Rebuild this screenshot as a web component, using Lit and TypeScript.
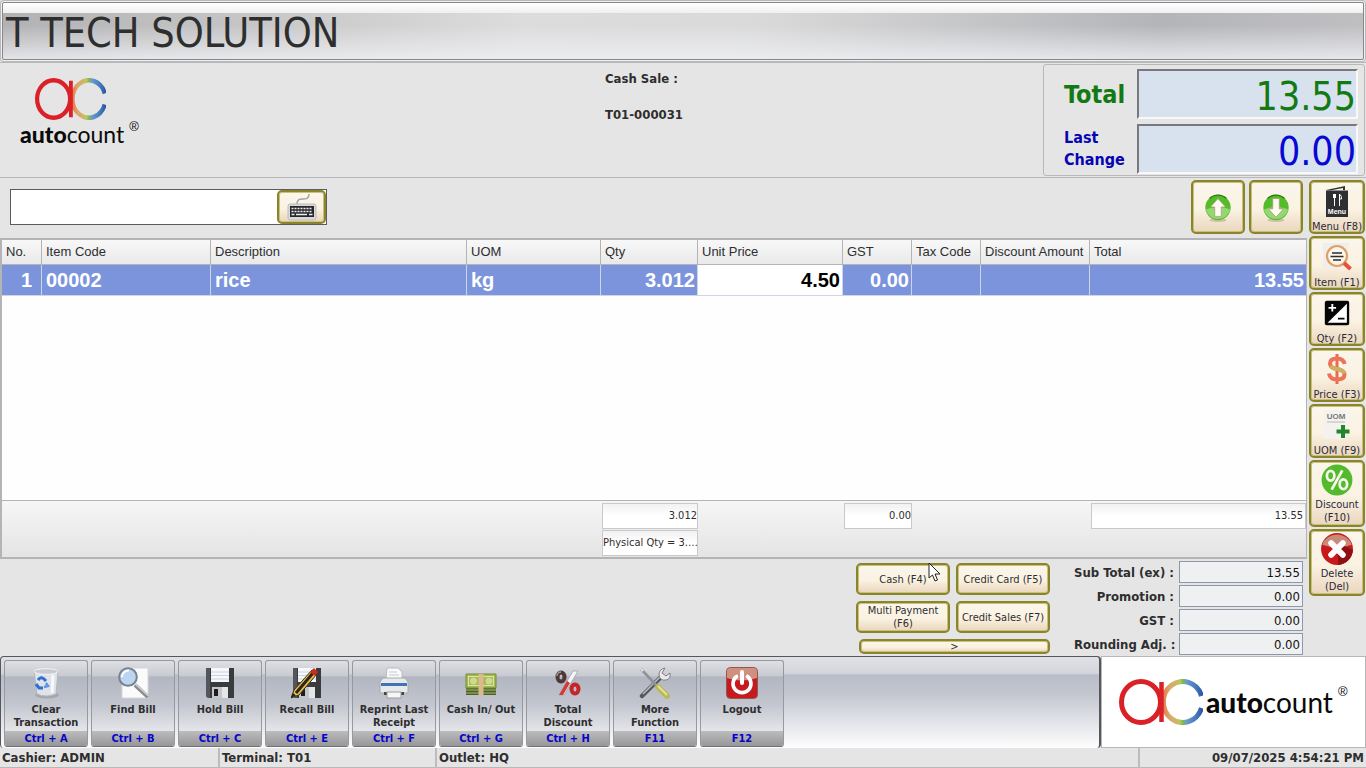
import { LitElement, html, svg, css } from "lit";
import type { TemplateResult } from "lit";
import { customElement, property, state } from "lit/decorators.js";
import { classMap } from "lit/directives/class-map.js";

const pic = (size: number, body: unknown, w = size) =>
  html`<svg width=${w} height=${size} viewBox="0 0 32 32" aria-hidden="true">${body}</svg>`;

const floppy = svg`
  <path d="M2 1h28v30H4l-2-2z" fill="#3a3b3f"/>
  <path d="M2 1h4v30H4l-2-2z" fill="#55565b"/>
  <rect x="7" y="1" width="18" height="14" fill="#f7f8fa"/>
  <path d="M7 5h18M7 8.500h18M7 12h18" stroke="#c9d2e2"/>
  <rect x="8" y="20" width="16" height="11" fill="#c4c6ca"/>
  <rect x="10" y="22" width="4" height="7" fill="#1d1d20"/>
  <rect x="18" y="20" width="6" height="11" fill="#e5e6e8"/>`;

const ICONS: Record<string, TemplateResult> = {
  keyboard: html`<svg width="30" height="28" viewBox="0 0 30 28" aria-hidden="true">
    <path d="M10 11c0-5 3-5 6-5s6 0 6-5" fill="none" stroke="#a4a4a6" stroke-width="1.600"/>
    <rect x="1" y="11" width="28" height="16" rx="2" fill="#d9d9db" stroke="#bcbcbe"/>
    <rect x="3" y="13" width="24" height="11" fill="#27282c"/>
    <path d="M4.500 15.500h21M4.500 18.500h21" stroke="#eeeeef" stroke-width="1.600" stroke-dasharray="2 1"/>
    <path d="M4.500 21.500h3M9 21.500h11M22 21.500h3.500" stroke="#eeeeef" stroke-width="1.600"/>
  </svg>`,
  up: pic(30, svg`
    <ellipse cx="16" cy="30" rx="9" ry="2" fill="#b9ab90" opacity=".6"/>
    <circle cx="16" cy="16.500" r="13.500" fill="#55bb2a"/>
    <path d="M3 19a13.500 13.500 0 0 0 26 0c-7-4-18-4-26 0z" fill="#93d873"/>
    <path d="M7 7a13 13 0 0 1 18 0" fill="none" stroke="#2a7c16" stroke-width="1.500"/>
    <path d="M16 7l8 9h-4.500v10h-7V16H8z" fill="#fdfaf4" stroke="#a79d63" stroke-width=".8"/>`),
  down: pic(30, svg`
    <ellipse cx="16" cy="30" rx="9" ry="2" fill="#b9ab90" opacity=".6"/>
    <circle cx="16" cy="16.500" r="13.500" fill="#55bb2a"/>
    <path d="M3 19a13.500 13.500 0 0 0 26 0c-7-4-18-4-26 0z" fill="#93d873"/>
    <path d="M7 7a13 13 0 0 1 18 0" fill="none" stroke="#2a7c16" stroke-width="1.500"/>
    <path d="M16 27l8-9h-4.500V7h-7v11H8z" fill="#fdfaf4" stroke="#a79d63" stroke-width=".8"/>`),
  menu: pic(32, svg`
    <path d="M5 5l19-4v4h-2V3L9 5.500z" fill="#333436"/>
    <path d="M5 5.500h22V32H5z" fill="#2e2f31"/>
    <path d="M12.500 9v4M14.500 9v4M13.500 9v12M18.500 21V9q2.500 2 2 5h-2" stroke="#fff" fill="none"/>
    <text x="16" y="28.500" font-family="Liberation Sans" font-weight="700" font-size="7" fill="#fff" text-anchor="middle">Menu</text>`),
  item: pic(32, svg`
    <path d="M2 2h26l-4 25H2z" fill="#efeeec"/>
    <circle cx="16" cy="15" r="10" fill="#faf6ee" stroke="#dfa066" stroke-width="2.200"/>
    <path d="M11 12h10M9.500 15.500h13M12 19h8" stroke="#2d2d2d" stroke-width="1.600"/>
    <path d="M23 22l6.500 6" stroke="#ea4f3c" stroke-width="4"/>`),
  qty: pic(30, svg`
    <rect x="3" y="3" width="26" height="26" rx="2" fill="#050505"/>
    <path d="M26.500 6v20.500H6z" fill="#fff"/>
    <path d="M7 10.500h8M11 6.500v8" stroke="#fff" stroke-width="2"/>
    <path d="M17 22h7" stroke="#050505" stroke-width="2"/>`),
  price: pic(32, svg`
    <path d="M16 1v30" stroke="#ea6a52" stroke-width="3"/>
    <path d="M23.500 11q-1-5.500-7.500-5.500-7 0-7 5 0 4.500 7 5.500t7.500 5.500q0 5-7.500 5-7 0-8-6" fill="none" stroke="#ec7358" stroke-width="4"/>
    <path d="M9.500 13q1.500 2.200 6.500 3 6.500 1 7.300 4.500" fill="none" stroke="#cdb065" stroke-width="4"/>`),
  uom: pic(32, svg`
    <path d="M3 1h22v29H3z" fill="#f4f2ef"/>
    <text x="15" y="10" font-family="Liberation Sans" font-weight="700" font-size="8" fill="#77787a" text-anchor="middle">UOM</text>
    <path d="M6 13h18" stroke="#b8b8b8"/>
    <path d="M22 16v13M15.500 22.500h13" stroke="#23862b" stroke-width="4"/>`),
  discount: pic(34, svg`
    <circle cx="16" cy="16" r="14.500" fill="#52ba2b"/>
    <g fill="none" stroke="#f7f6ea" stroke-width="2.600">
      <ellipse cx="10" cy="12" rx="3.500" ry="4.500"/><ellipse cx="22" cy="20" rx="3.500" ry="4.500"/>
      <path d="M21 7l-10 18"/></g>`),
  remove: pic(34, svg`
    <circle cx="16" cy="16" r="15" fill="#c8191d"/>
    <path d="M2 12a15 15 0 0 1 28 0q-14 5-28 0z" fill="#c98a78"/>
    <path d="M17 31a15 15 0 0 0 14-14L22 13l-5 5z" fill="#8e1013"/>
    <path d="M10.500 10.500l11 11M21.500 10.500l-11 11" stroke="#fff" stroke-width="5.500" stroke-linecap="round"/>`),
  clear: pic(32, svg`
    <ellipse cx="17" cy="28" rx="12" ry="3.500" fill="#a5a7aa"/>
    <path d="M4 4l3 23q9 4 19 0l2-23z" fill="#dfe3e9" stroke="#b4b8be"/>
    <ellipse cx="16" cy="4.500" rx="12" ry="2.800" fill="#c5cad3" stroke="#f3f4f6"/>
    <path d="M23 8l-1 18" stroke="#f6f8fa" stroke-width="3"/>
    <path d="M8 13q3-4 6-1l2 2" fill="none" stroke="#2f6fd0" stroke-width="3"/>
    <path d="M6 17l3 4h4" fill="none" stroke="#2f6fd0" stroke-width="3"/>
    <path d="M14 20l4-1-2-3" fill="none" stroke="#5d94e4" stroke-width="2.400"/>`),
  find: pic(32, svg`
    <path d="M5 1h26v30H5z" fill="#fbfbfc" stroke="#d5d6d8"/>
    <path d="M18 18l13 12" stroke="#8b8c90" stroke-width="4"/>
    <path d="M18.500 17l13 12" stroke="#d5d6d9" stroke-width="1.400"/>
    <circle cx="11" cy="10" r="8.800" fill="#bcd6f2" stroke="#77818f" stroke-width="2"/>
    <path d="M5 10a6.500 6.500 0 0 1 7-6.500" fill="none" stroke="#fff" stroke-width="2"/>`),
  hold: pic(32, floppy),
  recall: pic(32, svg`${floppy}
    <path d="M0 31l3-8L21 3l5 4L8 28z" fill="#e6bd4a" stroke="#3b3022"/>
    <path d="M5 26L22 6" stroke="#2c261e" stroke-width="3"/>
    <path d="M19 5l4-4 4 4-3 4z" fill="#cf2a1e"/>
    <path d="M0 31l2-5 3 2.500z" fill="#222"/>`),
  print: pic(32, svg`
    <path d="M8 12l1-11h11l4 4v7z" fill="#fafafa" stroke="#b9bbbe"/>
    <path d="M11 5h8M11 8h10" stroke="#c9cbce"/>
    <path d="M5 11h22l3 4v11H2V15z" fill="#e8e9eb" stroke="#a9abae"/>
    <path d="M3 16h26v3H3z" fill="#3f74b5"/>
    <path d="M6 25h20v3H6z" fill="#444649"/>
    <path d="M9 25h14v6H9z" fill="#f7f7f8" stroke="#9b9da0"/>`),
  cash: pic(32, svg`
    <path d="M1 21h30v7H1z" fill="#4c6127"/>
    <path d="M1 23h30M1 26h30" stroke="#a9b974"/>
    <path d="M1 7h30v14H1z" fill="#a3ba55" stroke="#74893a"/>
    <rect x="3.500" y="9.500" width="25" height="9" fill="none" stroke="#dde5a6"/>
    <circle cx="8.500" cy="14" r="3.500" fill="#cdda8a"/><circle cx="24" cy="14" r="3.500" fill="#cdda8a"/>
    <path d="M13.500 7h5v21h-5z" fill="#dcb98a"/>`),
  percent: pic(32, svg`
    <ellipse cx="9" cy="10" rx="3.500" ry="4.500" fill="none" stroke="#4d3a38" stroke-width="4"/>
    <ellipse cx="23" cy="22" rx="3.500" ry="4.500" fill="none" stroke="#c4262a" stroke-width="4"/>
    <path d="M5 9a4 4 0 0 1 4-4" fill="none" stroke="#a89a98" stroke-width="1.500"/>
    <path d="M21 4h5L12 28H7z" fill="#f5f5f5" stroke="#a3a3a6" stroke-width=".8"/>
    <path d="M15 14l3 2-7 12H7z" fill="#cf3a3a"/>`),
  tools: pic(32, svg`
    <path d="M3 29L23 9" stroke="#55575c" stroke-width="4.500" stroke-linecap="round"/>
    <path d="M4 27L23 8" stroke="#b9bcc1" stroke-width="1.600"/>
    <path d="M26 1l-3 5 4 3 4-3q1 6-4 7-6 1-7-5 0-6 6-7z" fill="#e8e9eb" stroke="#7e8085"/>
    <path d="M2 2l15 16" stroke="#8f9297" stroke-width="2.600"/>
    <path d="M1 1l4 2-2 2z" fill="#e9e9ea"/>
    <path d="M19 20l9 9" stroke="#b9b95a" stroke-width="6" stroke-linecap="round"/>
    <path d="M19 19l9 9" stroke="#e3e39a" stroke-width="1.800"/>`),
  power: pic(32, svg`
    <rect x=".5" y=".5" width="31" height="31" rx="4" fill="#c61a1e" stroke="#8e5a50"/>
    <path d="M1 4q0-3 3-3h24q3 0 3 3v7Q16 16 1 11z" fill="#d08f80"/>
    <path d="M10.500 9.500a9 9 0 1 0 11 0" fill="none" stroke="#fff" stroke-width="3.600" stroke-linecap="round"/>
    <path d="M16 5v11" stroke="#fff" stroke-width="4" stroke-linecap="round"/>`),
};

@customElement("brand-logo")
export class BrandLogo extends LitElement {
  @property({ type: Boolean, reflect: true }) wide = false;

  static styles = css`
    :host {
      display: inline-flex;
      flex-direction: column;
      color: #0a0a0a;
      font-family: Lato, "Liberation Sans", sans-serif;
      --word: 23px;
    }
    :host([wide]) {
      flex-direction: row;
      align-items: center;
      --word: 28px;
    }
    .mark {
      width: 71px;
      height: 42px;
      margin-left: 15px;
    }
    :host([wide]) .mark {
      width: 84px;
      height: 46px;
      margin-left: 0;
    }
    .word {
      display: flex;
      font-size: var(--word);
      line-height: 28px;
      white-space: nowrap;
    }
    :host([wide]) .word {
      padding-left: 3px;
    }
    .bold {
      font-weight: 900;
    }
    .thin {
      font-weight: 400;
    }
    .reg {
      font: 13px/13px "Liberation Sans", sans-serif;
      padding-left: 5px;
    }
    :host([wide]) .reg {
      margin-top: -3px;
    }
  `;

  render() {
    return html`
      <svg class="mark" viewBox="0 0 84 46" preserveAspectRatio="none" aria-hidden="true">
        <defs>
          <linearGradient id="arc" x1="42" x2="84" gradientUnits="userSpaceOnUse">
            <stop offset="0" stop-color="#f0683f" />
            <stop offset=".2" stop-color="#d9a868" />
            <stop offset=".45" stop-color="#c6bf68" />
            <stop offset=".52" stop-color="#72c43c" />
            <stop offset=".6" stop-color="#6d9bd0" />
            <stop offset=".85" stop-color="#4377b8" />
            <stop offset="1" stop-color="#2c50a6" />
          </linearGradient>
        </defs>
        <path d="M82.500 17a19.500 20.500 0 1 0 0 12" fill="none" stroke="url(#arc)" stroke-width="5" />
        <ellipse cx="22" cy="23" rx="19.500" ry="20.500" fill="none" stroke="#da2127" stroke-width="5" />
        <path d="M42.500 3v40" stroke="#da2127" stroke-width="4.500" />
      </svg>
      <span class="word"><span class="bold">auto</span><span class="thin">count</span><span class="reg">®</span></span>
    `;
  }
}

interface Column { head: string; value: string; right?: boolean; edit?: boolean }

@customElement("app-root")
export class AppRoot extends LitElement {
  @state() private columns: Column[] = [
    { head: "No.", value: "1", right: true },
    { head: "Item Code", value: "00002" },
    { head: "Description", value: "rice" },
    { head: "UOM", value: "kg" },
    { head: "Qty", value: "3.012", right: true },
    { head: "Unit Price", value: "4.50", right: true, edit: true },
    { head: "GST", value: "0.00", right: true },
    { head: "Tax Code", value: "" },
    { head: "Discount Amount", value: "" },
    { head: "Total", value: "13.55", right: true },
  ];

  private rail = [
    ["menu", "Menu (F8)"],
    ["item", "Item (F1)"],
    ["qty", "Qty (F2)"],
    ["price", "Price (F3)"],
    ["uom", "UOM (F9)"],
    ["discount", "Discount (F10)"],
    ["remove", "Delete (Del)"],
  ];

  private tools = [
    ["clear", "Clear Transaction", "Ctrl + A"],
    ["find", "Find Bill", "Ctrl + B"],
    ["hold", "Hold Bill", "Ctrl + C"],
    ["recall", "Recall Bill", "Ctrl + E"],
    ["print", "Reprint Last Receipt", "Ctrl + F"],
    ["cash", "Cash In/ Out", "Ctrl + G"],
    ["percent", "Total Discount", "Ctrl + H"],
    ["tools", "More Function", "F11"],
    ["power", "Logout", "F12"],
  ];

  private sums = [
    ["sub", "Sub Total (ex) :", "13.55"],
    ["promo", "Promotion :", "0.00"],
    ["gst", "GST :", "0.00"],
    ["round", "Rounding Adj. :", "0.00"],
  ];

  static styles = css`
    :host {
      display: flex;
      flex-direction: column;
      min-height: 100vh;
      background: #e5e5e5;
      color: #2e2e2e;
      font-family: Tahoma, "DejaVu Sans Condensed", "DejaVu Sans", sans-serif;
      font-size: 11px;
      overflow: hidden;
    }
    * {
      box-sizing: border-box;
    }
    button,
    input {
      font: inherit;
      color: inherit;
      margin: 0;
    }
    svg {
      display: block;
      flex: none;
    }

    .title {
      margin: 2px;
      border: 1px solid #86878a;
      border-radius: 2px;
      box-shadow: 0 0 0 1px #f0f0f0, 0 0 0 2px #b9b9b9;
      height: 58px;
      background:
        linear-gradient(#fff, #f0f0f0 17%, transparent 18%),
        linear-gradient(transparent 40%, rgba(240, 241, 245, 0.8)),
        linear-gradient(90deg, #b2b2b4, #dcdcdc 38%, #dadada 55%, #b4b5b9 85%, #bfbfc2);
    }
    .title h1 {
      margin: 0;
      padding: 3px 0 0 3px;
      font-weight: 400;
      font-size: 41px;
      line-height: 55px;
      white-space: nowrap;
    }

    .header {
      display: grid;
      grid-template-columns: minmax(0, 605fr) minmax(0, 438fr) 323px;
      height: 116px;
      border: solid #b8b8b8;
      border-width: 1px 0;
    }
    .brand {
      padding: 15px 0 0 20px;
    }
    .sale {
      font-size: 13px;
      font-weight: 700;
      line-height: 18px;
      padding-top: 7px;
    }
    .sale p {
      margin: 0 0 18px;
    }
    .totals {
      display: grid;
      grid-template-columns: 73px 221px;
      grid-template-rows: 50px 50px;
      gap: 5px 0;
      align-items: center;
      margin: 1px 1px 1px 0;
      padding: 4px 7px 1px 20px;
      border: 1px solid #b8b8b8;
      border-radius: 3px;
      font-weight: 700;
    }
    .totals .big {
      color: #137a13;
      font-size: 25px;
    }
    .totals .mid {
      color: #0505b4;
      font-size: 16px;
      line-height: 22px;
    }
    .totals input {
      height: 50px;
      width: 100%;
      padding: 5px 0 0;
      border: 2px solid #77797c;
      border-right-color: #f8f8f8;
      border-bottom-color: #f8f8f8;
      background: #d8e2ee;
      font-weight: 400;
      font-size: 39px;
      text-align: right;
    }
    .totals .green {
      color: #137a13;
    }
    .totals .blue {
      color: #0707d6;
    }

    .middle {
      display: flex;
      flex: 1;
    }
    .work {
      display: flex;
      flex: 1;
      flex-direction: column;
      min-width: 0;
    }
    .search {
      display: flex;
      align-items: center;
      gap: 4px;
      height: 60px;
      padding: 1px 5px 3px 10px;
    }
    .entry {
      display: flex;
      width: 317px;
      height: 36px;
      margin-right: auto;
      border: 1px solid #5c5c5e;
      background: #fff;
    }
    .entry input {
      flex: 1;
      min-width: 0;
      border: 0;
      background: transparent;
      padding: 0 6px;
      font-size: 18px;
    }
    .gold {
      display: flex;
      align-items: center;
      justify-content: center;
      padding: 0;
      border: 2px solid #8a852c;
      border-radius: 5px;
      box-shadow: inset 0 0 0 1px #c8c178;
      background: linear-gradient(#fbf6ec, #faf2e2 55%, #ead6bd);
      line-height: 13px;
      overflow: hidden;
    }
    .keys {
      width: 49px;
    }
    .arrow {
      width: 54px;
      height: 54px;
    }

    .sheet {
      display: flex;
      flex: 1;
      flex-direction: column;
      margin-right: 1px;
      border: 2px solid #b4b4b6;
      border-width: 2px 1px 2px 2px;
      background: #fefefe;
      font-family: "Liberation Sans", Arial, sans-serif;
    }
    .grid {
      width: 100%;
      border-collapse: separate;
      border-spacing: 0;
      table-layout: fixed;
    }
    .grid th {
      height: 25px;
      padding: 0 0 1px 4px;
      border: solid #b4b4b6;
      border-width: 0 1px 1px 0;
      background: linear-gradient(#f8f8f9, #e9e9ea);
      font-size: 13px;
      font-weight: 400;
      text-align: left;
      white-space: nowrap;
    }
    .grid td {
      height: 31px;
      padding: 0 2px 0 4px;
      border: solid #cfd5e6;
      border-width: 0 1px 1px 0;
      background: #7b94dc;
      color: #fff;
      font-size: 20px;
      font-weight: 700;
    }
    .grid td.right {
      text-align: right;
    }
    .grid td.no {
      padding-right: 9px;
    }
    .grid td.edit {
      padding: 0;
      background: #fff;
      color: #000;
    }
    .grid td input {
      width: 100%;
      height: 30px;
      padding: 0 2px;
      border: 0;
      background: transparent;
      text-align: right;
    }
    .grid th:last-child,
    .grid td:last-child {
      border-right: 0;
    }
    .c-no { width: 40px; }
    .c-code { width: 169px; }
    .c-desc { width: 256px; }
    .c-uom { width: 134px; }
    .c-qty { width: 97px; }
    .c-price { width: 145px; }
    .c-gst { width: 69px; }
    .c-tax { width: 69px; }
    .c-disc { width: 109px; }

    .foot {
      display: grid;
      grid-template-columns: 599px 97px 145px 69px 69px 109px minmax(0, 1fr);
      grid-template-rows: 26px 26px;
      gap: 1px 0;
      height: 57px;
      margin-top: auto;
      padding-top: 2px;
      border-top: 1px solid #b4b4b6;
      background: linear-gradient(#f6f6f7, #e4e4e5);
      font-family: Tahoma, "DejaVu Sans Condensed", sans-serif;
      line-height: 24px;
    }
    .box {
      margin-left: 1px;
      border: 1px solid #c9c9cb;
      background: linear-gradient(#f1f1f2, #fff 50%);
      text-align: right;
      white-space: nowrap;
    }
    .f-qty { grid-column: 2; }
    .f-gst { grid-column: 4; }
    .f-total { grid-column: 7; padding-right: 2px; }
    .f-phys { grid-column: 2; grid-row: 2; text-align: left; }

    .pay {
      display: flex;
      justify-content: flex-end;
      gap: 24px;
      height: 97px;
      padding: 2px 5px 0 0;
    }
    .methods {
      position: relative;
      display: grid;
      grid-template-columns: 94px 94px;
      grid-template-rows: 32px 32px 15px;
      gap: 6px;
      padding-top: 2px;
    }
    .more {
      grid-column: 1 / 3;
      margin-left: 3px;
    }
    .pointer {
      position: absolute;
      left: 72px;
      top: 1px;
    }
    .sums {
      display: grid;
      grid-template-columns: 100px 124px;
      grid-auto-rows: 22px;
      gap: 2px 5px;
      align-items: center;
      font-size: 13px;
    }
    .sums label {
      font-weight: 700;
      text-align: right;
      white-space: nowrap;
    }
    .sums input {
      width: 100%;
      height: 22px;
      padding: 0 2px;
      border: 1px solid #8e96a8;
      background: #eff0f2;
      color: #111;
      font-size: 13px;
      text-align: right;
    }

    .rail {
      display: flex;
      flex-direction: column;
      gap: 2px;
      width: 58px;
      padding: 2px 1px 0;
    }
    .rail .gold {
      flex-direction: column;
      justify-content: flex-start;
      height: 54px;
      color: #2a2a3c;
      white-space: nowrap;
    }
    .rail .art {
      display: flex;
      align-items: center;
      flex: none;
      height: 38px;
    }
    .rail .tall {
      height: 67px;
      white-space: normal;
    }
    .rail .tall .art {
      height: 36px;
    }

    .dock {
      display: flex;
      height: 92px;
    }
    .bar {
      display: flex;
      flex: 1;
      gap: 3px;
      padding: 3px 3px 2px;
      border: 1px solid #55575c;
      border-width: 1px 2px 0 1px;
      border-radius: 4px;
      background: linear-gradient(#e0e1e5, #d3d5dc 18%, #b9bdc8 20%, #c3c6cf 40%, #e6e7ec 75%, #fdfdfd);
    }
    .tool {
      display: flex;
      flex-direction: column;
      align-items: center;
      width: 84px;
      height: 87px;
      padding: 6px 0 0;
      border: 1px solid #97999f;
      border-bottom-color: #6f7177;
      border-radius: 3px;
      background: linear-gradient(#dedfe3, #c9cbd2 17%, #b2b6c1 19%, #c2c5ce 50%, #e4e5e9 82%);
      font-weight: 700;
      line-height: 13px;
      overflow: hidden;
    }
    .tool .text {
      flex: 1;
      padding: 4px 4px 0;
    }
    .tool .key {
      align-self: stretch;
      height: 15px;
      line-height: 15px;
      background: linear-gradient(#bcbcbe, #97979a);
      color: #0505c8;
    }
    .sponsor {
      display: flex;
      align-items: center;
      width: 265px;
      padding-left: 17px;
      border: 1px solid #b8b8b8;
      background: #fff;
    }

    .status {
      display: grid;
      grid-template-columns: 220px 217px minmax(0, 1fr) 226px;
      height: 20px;
      border-bottom: 1px solid #b8b8b8;
      font-size: 13px;
      font-weight: 700;
      line-height: 20px;
    }
    .status span {
      padding: 0 2px;
      border-right: 2px solid #bcbcbe;
      white-space: nowrap;
    }
    .status .clock {
      border-right: 0;
      text-align: right;
    }
  `;

  render() {
    return html`
      <header class="title"><h1>T TECH SOLUTION</h1></header>
      <section class="header">
        <div class="brand"><brand-logo></brand-logo></div>
        <div class="sale"><p>Cash Sale :</p><p>T01-000031</p></div>
        <div class="totals">
          <label class="big" for="total">Total</label>
          <input id="total" class="green" readonly .value=${"13.55"} />
          <label class="mid" for="change">Last<br />Change</label>
          <input id="change" class="blue" readonly .value=${"0.00"} />
        </div>
      </section>
      <main class="middle">
        <div class="work">
          <div class="search">
            <div class="entry">
              <input type="text" aria-label="Item entry" />
              <button class="gold keys" aria-label="Keyboard">${ICONS.keyboard}</button>
            </div>
            <button class="gold arrow" aria-label="Previous row">${ICONS.up}</button>
            <button class="gold arrow" aria-label="Next row">${ICONS.down}</button>
          </div>
          ${this.renderSheet()}
          <div class="pay">
            <div class="methods">
              <button class="gold">Cash (F4)</button>
              <button class="gold">Credit Card (F5)</button>
              <button class="gold">Multi Payment (F6)</button>
              <button class="gold">Credit Sales (F7)</button>
              <button class="gold more" aria-label="More payment methods">&gt;</button>
              <svg class="pointer" width="13" height="20" viewBox="0 0 13 20" aria-hidden="true">
                <path d="M1 1v15l3.500-3 2.500 6 2.500-1-2.500-6h5z" fill="#fff" stroke="#222" />
              </svg>
            </div>
            <div class="sums">
              ${this.sums.map(([id, label, value]) => html`
                <label for=${id}>${label}</label><input id=${id} readonly .value=${value} />`)}
            </div>
          </div>
        </div>
        <nav class="rail">
          ${this.rail.map(([icon, label], i) => html`
            <button class=${classMap({ gold: true, tall: i > 4 })}>
              <span class="art">${ICONS[icon]}</span><span>${label}</span>
            </button>`)}
        </nav>
      </main>
      <section class="dock">
        <div class="bar">
          ${this.tools.map(([icon, label, key]) => html`
            <button class="tool">${ICONS[icon]}<span class="text">${label}</span><span class="key">${key}</span></button>`)}
        </div>
        <div class="sponsor"><brand-logo wide></brand-logo></div>
      </section>
      <footer class="status">
        <span>Cashier: ADMIN</span><span>Terminal: T01</span><span>Outlet: HQ</span>
        <span class="clock">09/07/2025 4:54:21 PM</span>
      </footer>
    `;
  }

  private renderSheet() {
    return html`
      <div class="sheet">
        <table class="grid">
          <colgroup>
            <col class="c-no" /><col class="c-code" /><col class="c-desc" /><col class="c-uom" />
            <col class="c-qty" /><col class="c-price" /><col class="c-gst" /><col class="c-tax" />
            <col class="c-disc" /><col />
          </colgroup>
          <thead>
            <tr>${this.columns.map((c) => html`<th scope="col">${c.head}</th>`)}</tr>
          </thead>
          <tbody>
            <tr>
              ${this.columns.map((c) => html`
                <td class=${classMap({ right: !!c.right, edit: !!c.edit, no: c.head === "No." })}>
                  ${c.edit ? html`<input aria-label=${c.head} .value=${c.value} />` : c.value}
                </td>`)}
            </tr>
          </tbody>
        </table>
        <div class="foot">
          <div class="box f-qty">3.012</div>
          <div class="box f-gst">0.00</div>
          <div class="box f-total">13.55</div>
          <div class="box f-phys">Physical Qty = 3.…</div>
        </div>
      </div>
    `;
  }
}
